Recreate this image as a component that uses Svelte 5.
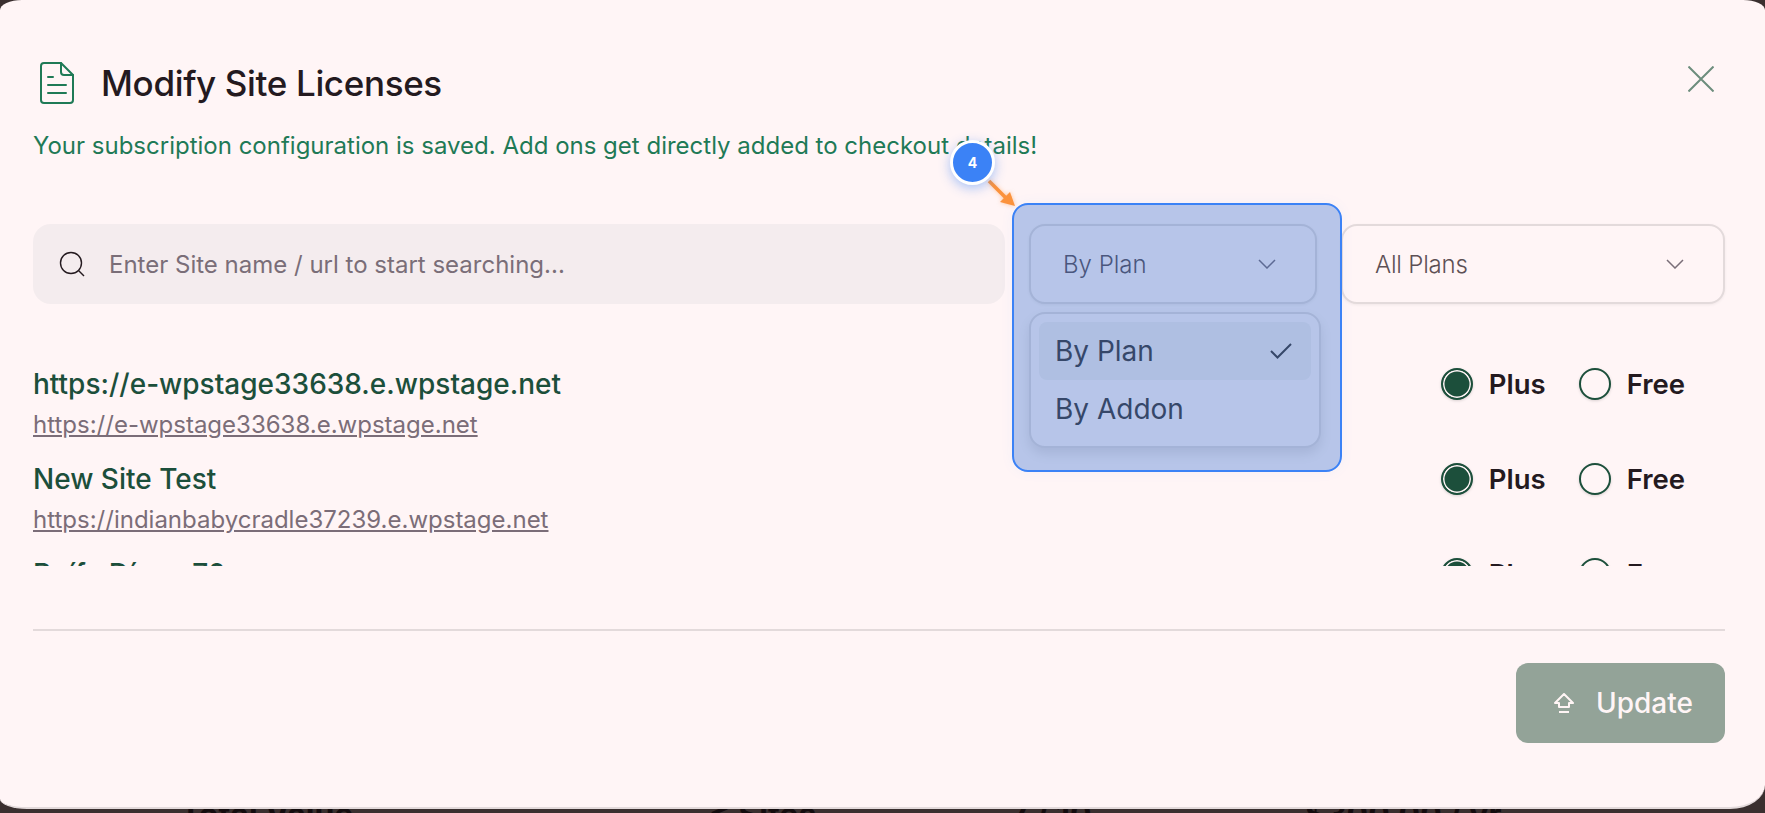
<script>
  const sites = [
    { name: 'https://e-wpstage33638.e.wpstage.net', url: 'https://e-wpstage33638.e.wpstage.net' },
    { name: 'New Site Test', url: 'https://indianbabycradle37239.e.wpstage.net' },
    { name: 'Buífa Díana 70', url: 'https://buifadiana70.e.wpstage.net' }
  ];
</script>

<div class="page">
  <div class="modal">
    <header class="head">
      <div class="title">
        <svg class="doc" width="34" height="42" viewBox="0 0 34 42" fill="none" stroke="#1f7a56" stroke-width="2" stroke-linejoin="round" stroke-linecap="round">
          <path d="M4 1h17l12 12v25a3 3 0 0 1-3 3H4a3 3 0 0 1-3-3V4a3 3 0 0 1 3-3z" />
          <path d="M21 1v9a3 3 0 0 0 3 3h9" />
          <path d="M8 15h5M8 23h18M8 31h18" />
        </svg>
        <h1>Modify Site Licenses</h1>
      </div>
      <svg class="close" width="26" height="26" viewBox="0 0 26 26" fill="none" stroke="#6d8d7d" stroke-width="2">
        <path d="M0.5 0.5l25 25M25.5 0.5l-25 25" />
      </svg>
    </header>

    <p class="sub">Your subscription configuration is saved. Add ons get directly added to checkout details!</p>

    <div class="toolbar">
      <div class="search">
        <svg width="26" height="26" viewBox="0 0 26 26" fill="none" stroke="#241a1f" stroke-width="1.4">
          <circle cx="12" cy="12" r="10.5" />
          <path d="M19.5 19.5L25 25" />
        </svg>
        <span>Enter Site name / url to start searching...</span>
      </div>

      <div class="sel-wrap">
        <div class="select first">
          <span>By Plan</span>
          <svg class="chev" width="18" height="10" viewBox="0 0 18 10" fill="none" stroke="#7a6e78" stroke-width="1.5"><path d="M1 1l8 8 8-8" /></svg>
        </div>
        <div class="menu">
          <div class="item on">
            <span>By Plan</span>
            <svg width="22" height="16" viewBox="0 0 22 16" fill="none" stroke="#3f3a38" stroke-width="2"><path d="M1 8l6.5 6.5L21 1" /></svg>
          </div>
          <div class="item"><span>By Addon</span></div>
        </div>
        <div class="highlight">
          <svg class="arrow" width="40" height="40" viewBox="0 0 40 40" fill="none">
            <path d="M6 6L25 25" stroke="#fb923c" stroke-width="3.5" />
            <path d="M32 31L17 27L27 17Z" fill="#fb923c" />
          </svg>
          <div class="badge">4</div>
        </div>
      </div>

      <div class="select second">
        <span>All Plans</span>
        <svg class="chev" width="18" height="10" viewBox="0 0 18 10" fill="none" stroke="#7a6e78" stroke-width="1.5"><path d="M1 1l8 8 8-8" /></svg>
      </div>
    </div>

    <div class="list">
      {#each sites as s}
        <div class="row">
          <div class="info">
            <div class="name">{s.name}</div>
            <a class="url" href={s.url}>{s.url}</a>
          </div>
          <div class="choices">
            <div class="choice"><span class="radio checked"></span><span>Plus</span></div>
            <div class="choice"><span class="radio"></span><span>Free</span></div>
          </div>
        </div>
      {/each}
    </div>

    <div class="divider"></div>

    <div class="foot">
      <button class="update">
        <svg width="20" height="20" viewBox="0 0 20 20" fill="none" stroke="#fff5f5" stroke-width="2" stroke-linejoin="round">
          <path d="M10 1L19 10H15V14H5V10H1Z" />
          <path d="M5 19H15" />
        </svg>
        <span>Update</span>
      </button>
    </div>
  </div>

  <div class="behind">
    <span>Total Value</span>
    <span>&lt; Sites</span>
    <span>7 / 10</span>
    <span>$300.00 / yr</span>
  </div>
</div>

<style>
  :global(body) {
    margin: 0;
    background: #3a2f2f;
  }
  .page {
    height: 813px;
    overflow: hidden;
    background: #3a2f2f;
    font-family: Inter, "Liberation Sans", sans-serif;
  }
  .modal {
    height: 809px;
    box-sizing: border-box;
    background: #fff5f6;
    border-bottom: 2px solid #e3dadb;
    border-radius: 22px 22px 35px 27px / 10px 10px 24px 10px;
    padding: 62px 40px 0 33px;
  }
  .head {
    display: flex;
    align-items: flex-start;
    justify-content: space-between;
    height: 42px;
  }
  .title {
    display: flex;
    align-items: center;
    gap: 27px;
    height: 42px;
  }
  .doc {
    margin-left: 7px;
    flex: none;
  }
  h1 {
    margin: 0;
    font-size: 35px;
    font-weight: 500;
    line-height: 42px;
    letter-spacing: -0.35px;
    color: #241a1f;
  }
  .close {
    margin: 4px 11px 0 0;
  }
  .sub {
    margin: 26px 0 0 0;
    font-size: 24px;
    line-height: 32px;
    color: #1f7a56;
  }
  .toolbar {
    display: flex;
    gap: 24px;
    margin-top: 62px;
    height: 80px;
  }
  .search {
    flex: 1;
    display: flex;
    align-items: center;
    gap: 24px;
    padding-left: 26px;
    background: #f4ecee;
    border-radius: 18px;
    font-size: 24px;
    color: #7a6e78;
  }
  .sel-wrap {
    position: relative;
    width: 288px;
    flex: none;
  }
  .select {
    box-sizing: border-box;
    height: 80px;
    display: flex;
    align-items: center;
    justify-content: space-between;
    background: #fff5f6;
    border: 2px solid #e3dadb;
    border-radius: 16px;
    box-shadow: 0 1px 3px rgba(0, 0, 0, 0.06);
    font-size: 24px;
    font-weight: 300;
    color: #5d5055;
  }
  .first {
    padding: 0 39px 0 32px;
  }
  .second {
    width: 384px;
    flex: none;
    padding: 0 39px 0 32px;
    letter-spacing: -0.2px;
  }
  .menu {
    position: absolute;
    left: 0;
    top: 88px;
    width: 292px;
    height: 136px;
    box-sizing: border-box;
    padding: 8px 8px 0;
    background: #fff5f6;
    border: 2px solid #e3dadb;
    border-radius: 16px;
    box-shadow: 0 6px 12px rgba(0, 0, 0, 0.1);
    font-size: 28px;
    color: #3f3a38;
  }
  .item {
    height: 58px;
    display: flex;
    align-items: center;
    justify-content: space-between;
    padding: 0 19px 0 16px;
    border-radius: 8px;
  }
  .item.on {
    background: #f3ecec;
  }
  .highlight {
    position: absolute;
    left: -17px;
    top: -21px;
    width: 330px;
    height: 269px;
    box-sizing: border-box;
    background: rgba(37, 100, 206, 0.33);
    border: 2px solid #3b82f6;
    border-radius: 16px;
    box-shadow: 0 0 14px rgba(59, 130, 246, 0.05);
  }
  .arrow {
    position: absolute;
    left: -31px;
    top: -30px;
    overflow: visible;
    filter: drop-shadow(0 0 2px rgba(251, 146, 60, 0.5));
  }
  .badge {
    position: absolute;
    left: -64px;
    top: -65px;
    width: 45px;
    height: 45px;
    box-sizing: border-box;
    display: flex;
    align-items: center;
    justify-content: center;
    background: #3b82f6;
    border: 3px solid #fff;
    border-radius: 50%;
    box-shadow: 0 3px 12px rgba(59, 130, 246, 0.45);
    color: #fff;
    font-size: 14px;
    font-weight: 700;
  }
  .list {
    margin-top: 62px;
    height: 200px;
    overflow: hidden;
  }
  .row {
    height: 95px;
    display: flex;
    justify-content: space-between;
  }
  .name {
    font-size: 28px;
    font-weight: 500;
    line-height: 36px;
    color: #1c4f3b;
  }
  .url {
    display: block;
    margin-top: 8px;
    font-size: 24px;
    font-weight: 400;
    line-height: 30px;
    color: #7b6d78;
    text-decoration: underline;
  }
  .choices {
    display: flex;
    gap: 33px;
    padding-right: 40px;
    height: 36px;
  }
  .choice {
    display: flex;
    align-items: center;
    gap: 16px;
    font-size: 27.5px;
    font-weight: 600;
    color: #241a1f;
  }
  .radio {
    box-sizing: border-box;
    width: 32px;
    height: 32px;
    border: 2px solid #1c4f3b;
    border-radius: 50%;
    background: #fff5f6;
    box-shadow: 0 1px 3px rgba(0, 0, 0, 0.15);
  }
  .radio.checked {
    background: #1c4f3b;
    box-shadow: inset 0 0 0 1.5px #fff5f6, 0 1px 3px rgba(0, 0, 0, 0.15);
  }
  .divider {
    margin-top: 63px;
    height: 2px;
    background: #e3dadb;
  }
  .foot {
    display: flex;
    justify-content: flex-end;
    margin-top: 32px;
  }
  .update {
    box-sizing: border-box;
    width: 209px;
    height: 80px;
    display: flex;
    align-items: center;
    gap: 22px;
    padding: 0 0 0 38px;
    border: none;
    border-radius: 12px;
    background: #93a398;
    color: #fff5f6;
    font-family: inherit;
    font-size: 28px;
    font-weight: 500;
  }
  .behind {
    display: grid;
    grid-template-columns: 529px 301px 295px auto;
    padding-left: 180px;
    font-size: 32px;
    font-weight: 700;
    line-height: 12px;
    color: #140c0e;
    height: 4px;
    overflow: hidden;
  }
</style>
